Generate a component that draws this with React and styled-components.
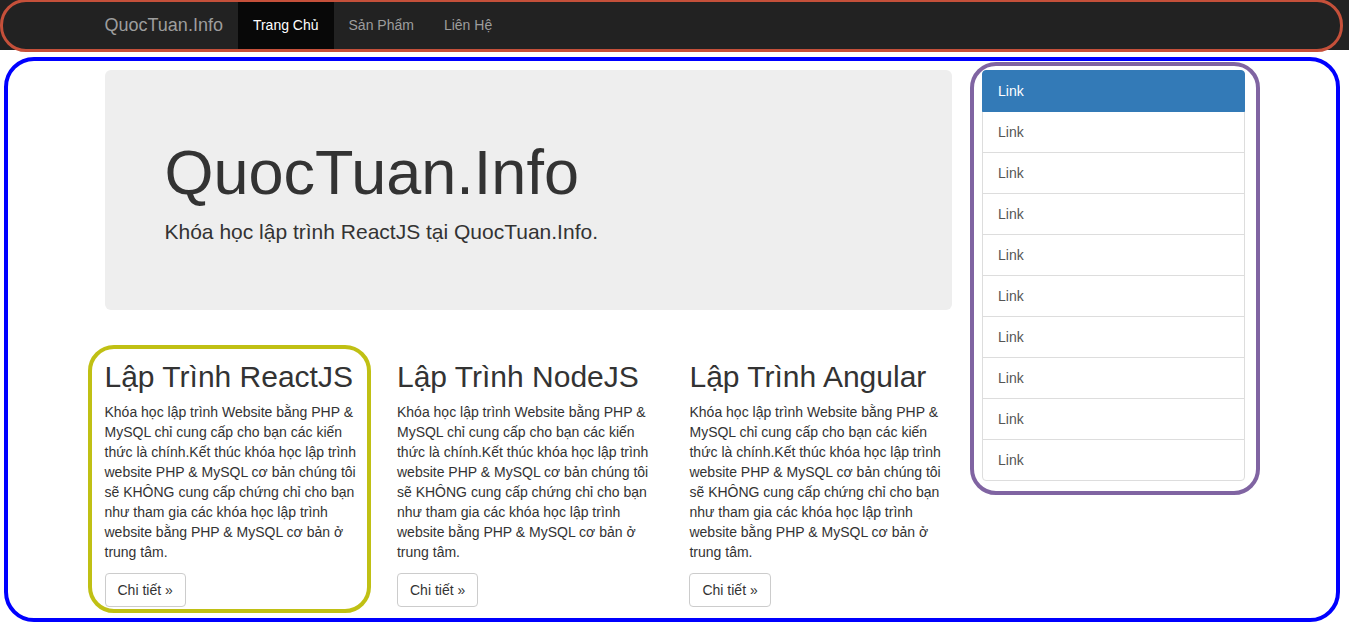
import styled, { createGlobalStyle } from 'styled-components'

const GlobalStyle = createGlobalStyle`
    html { overflow: hidden; }
    body {
        margin: 0;
        font-family: 'Liberation Sans', Arial, sans-serif;
        font-size: 14px;
        line-height: 1.42857;
        color: #333;
        background: #fff;
    }
    * { box-sizing: border-box; }
`

const Page = styled.div`
    position: relative;
    width: 1349px;
    height: 627px;
`

const Navbar = styled.nav`
    height: 50px;
    background: #222;
    overflow: hidden;
`

const Container = styled.div`
    width: 1170px;
    margin: 0 auto;
    padding: 0 15px;
`

const NavInner = styled(Container)`
    display: flex;
`

const Brand = styled.a`
    margin-left: -15px;
    padding: 15px;
    font-size: 18px;
    line-height: 20px;
    color: #9d9d9d;
    text-decoration: none;
`

const NavList = styled.ul`
    display: flex;
    margin: 0;
    padding: 0;
    list-style: none;
`

const NavLink = styled.a`
    display: block;
    padding: 15px;
    line-height: 20px;
    color: ${(p) => (p.$active ? '#fff' : '#9d9d9d')};
    background: ${(p) => (p.$active ? '#080808' : 'transparent')};
    text-decoration: none;
`

const Main = styled(Container)`
    margin-top: 20px;
`

const Row = styled.div`
    display: flex;
    align-items: flex-start;
    margin: 0 -15px;
`

const Content = styled.div`
    width: 75%;
    padding: 0 15px;
`

const Jumbotron = styled.div`
    background: #eee;
    border-radius: 6px;
    padding: 48px 60px;
    margin-bottom: 30px;
    & h1 {
        margin: 20px 0 10px;
        font-size: 63px;
        font-weight: 500;
        line-height: 1.1;
    }
    & p {
        margin: 0 0 15px;
        font-size: 21px;
        line-height: 30px;
        font-weight: 200;
    }
`

const Course = styled.div`
    width: 33.3333%;
    padding: 0 15px;
    & h2 {
        margin: 20px 0 10px;
        font-size: 30px;
        font-weight: 500;
        line-height: 1.1;
    }
    & p {
        margin: 0 0 10px;
    }
`

const Button = styled.a`
    display: inline-block;
    padding: 6px 12px;
    border: 1px solid #ccc;
    border-radius: 4px;
    color: #333;
    background: #fff;
    text-decoration: none;
    line-height: 20px;
`

const Sidebar = styled.div`
    width: 25%;
    padding: 0 15px;
`

const ListGroup = styled.div`
    display: flex;
    flex-direction: column;
`

const ListItem = styled.a`
    display: block;
    padding: 10px 15px;
    margin-bottom: -1px;
    line-height: 20px;
    border: 1px solid ${(p) => (p.$active ? '#337ab7' : '#ddd')};
    background: ${(p) => (p.$active ? '#337ab7' : '#fff')};
    color: ${(p) => (p.$active ? '#fff' : '#555')};
    text-decoration: none;
    position: relative;
    z-index: ${(p) => (p.$active ? 2 : 1)};
    &:first-child {
        border-radius: 4px 4px 0 0;
    }
    &:last-child {
        border-radius: 0 0 4px 4px;
    }
`

// annotation outlines drawn over the page
const Mark = styled.div`
    position: absolute;
    left: ${(p) => p.$x}px;
    top: ${(p) => p.$y}px;
    width: ${(p) => p.$w}px;
    height: ${(p) => p.$h}px;
    border: ${(p) => p.$s || 4}px solid ${(p) => p.$color};
    border-radius: ${(p) => p.$r}px;
    pointer-events: none;
`

const text =
    'Khóa học lập trình Website bằng PHP & MySQL chỉ cung cấp cho bạn các kiến thức là chính.Kết thúc khóa học lập trình website PHP & MySQL cơ bản chúng tôi sẽ KHÔNG cung cấp chứng chỉ cho bạn như tham gia các khóa học lập trình website bằng PHP & MySQL cơ bản ở trung tâm.'

const courses = ['Lập Trình ReactJS', 'Lập Trình NodeJS', 'Lập Trình Angular']

export default function App() {
    return (
        <Page>
            <GlobalStyle />
            <Navbar>
                <NavInner>
                    <Brand href="#">QuocTuan.Info</Brand>
                    <NavList>
                        <li><NavLink $active href="#">Trang Chủ</NavLink></li>
                        <li><NavLink href="#">Sản Phẩm</NavLink></li>
                        <li><NavLink href="#">Liên Hệ</NavLink></li>
                    </NavList>
                </NavInner>
            </Navbar>
            <Main>
                <Row>
                    <Content>
                        <Jumbotron>
                            <h1>QuocTuan.Info</h1>
                            <p>Khóa học lập trình ReactJS tại QuocTuan.Info.</p>
                        </Jumbotron>
                        <Row>
                            {courses.map((c) => (
                                <Course key={c}>
                                    <h2>{c}</h2>
                                    <p>{text}</p>
                                    <Button href="#">Chi tiết »</Button>
                                </Course>
                            ))}
                        </Row>
                    </Content>
                    <Sidebar>
                        <ListGroup>
                            {Array.from({ length: 10 }).map((_, i) => (
                                <ListItem key={i} $active={i === 0} href="#">Link</ListItem>
                            ))}
                        </ListGroup>
                    </Sidebar>
                </Row>
            </Main>
            <Mark $x={0} $y={-1} $w={1343} $h={53} $r={26} $s={3.5} $color="#c5503a" />
            <Mark $x={4} $y={57} $w={1336} $h={565} $r={30} $color="#0000ff" />
            <Mark $x={970} $y={62} $w={290} $h={433} $r={26} $color="#8064a2" />
            <Mark $x={88} $y={345} $w={283} $h={268} $r={26} $color="#c0c014" />
        </Page>
    )
}
